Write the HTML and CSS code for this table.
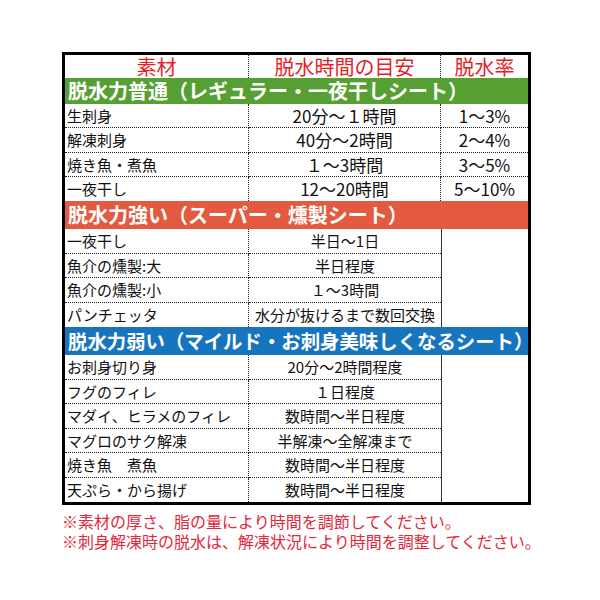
FILE: index.html
```html
<!DOCTYPE html>
<html lang="ja">
<head>
<meta charset="utf-8">
<title>脱水シート 目安表</title>
<link rel="stylesheet" href="styles.css">
</head>
<body>
<div class="sheet">
  <div class="grid">
    <div class="c c1 head">素材</div>
    <div class="c c2 head">脱水時間の目安</div>
    <div class="c c3 head">脱水率</div>

    <div class="bar green">脱水力普通（レギュラー・一夜干しシート）</div>
    <div class="c c1">生刺身</div><div class="c c2 big">20分～１時間</div><div class="c c3 big">1～3%</div>
    <div class="c c1">解凍刺身</div><div class="c c2 big">40分～2時間</div><div class="c c3 big">2～4%</div>
    <div class="c c1">焼き魚・煮魚</div><div class="c c2 big">１～3時間</div><div class="c c3 big">3～5%</div>
    <div class="c c1 last">一夜干し</div><div class="c c2 big last">12～20時間</div><div class="c c3 big last">5～10%</div>

    <div class="bar orange">脱水力強い（スーパー・燻製シート）</div>
    <div class="merge m2"></div>
    <div class="c c1">一夜干し</div><div class="c c2 solo">半日～1日</div>
    <div class="c c1">魚介の燻製:大</div><div class="c c2 solo">半日程度</div>
    <div class="c c1">魚介の燻製:小</div><div class="c c2 solo">１～3時間</div>
    <div class="c c1 last">パンチェッタ</div><div class="c c2 solo last">水分が抜けるまで数回交換</div>

    <div class="bar blue">脱水力弱い（マイルド・お刺身美味しくなるシート）</div>
    <div class="merge m3"></div>
    <div class="c c1">お刺身切り身</div><div class="c c2 solo">20分～2時間程度</div>
    <div class="c c1">フグのフィレ</div><div class="c c2 solo">１日程度</div>
    <div class="c c1">マダイ、ヒラメのフィレ</div><div class="c c2 solo">数時間～半日程度</div>
    <div class="c c1">マグロのサク解凍</div><div class="c c2 solo">半解凍～全解凍まで</div>
    <div class="c c1">焼き魚　煮魚</div><div class="c c2 solo">数時間～半日程度</div>
    <div class="c c1 last">天ぷら・から揚げ</div><div class="c c2 solo last">数時間～半日程度</div>
  </div>
  <div class="notes">
    <p>※素材の厚さ、脂の量により時間を調節してください。</p>
    <p>※刺身解凍時の脱水は、解凍状況により時間を調整してください。</p>
  </div>
</div>
</body>
</html>
```

FILE: styles.css
```css
html, body {
  margin: 0;
  padding: 0;
  background: #ffffff;
}

body {
  font-family: "Noto Sans CJK JP", "Noto Sans", sans-serif;
  color: #111111;
}

.sheet {
  padding: 52px 0 0 62px;
  width: 469px;
}

.grid {
  box-sizing: border-box;
  width: 469px;
  border: 3px solid #000000;
  display: grid;
  grid-template-columns: 184px 192px 87px;
  grid-template-rows: 23px 26px repeat(4, 24.25px) 28px repeat(4, 24.5px) 28px repeat(6, 24.5px);
}

.c {
  box-sizing: border-box;
  display: flex;
  align-items: center;
  font-size: 15px;
  line-height: 1;
  white-space: nowrap;
  border-bottom: 1px dotted #222222;
}

.c.big {
  font-size: 17px;
}

.c.last {
  border-bottom: none;
}

.c1 {
  padding-left: 2px;
  border-right: 1px dotted #222222;
}

.c2 {
  justify-content: center;
  border-right: 1px dotted #222222;
}

.c2.solo {
  border-right: none;
}

.c3 {
  justify-content: center;
}

.c.head {
  justify-content: center;
  padding-left: 0;
  font-size: 20px;
  color: #e61e28;
  border-bottom: none;
}

.bar {
  grid-column: 1 / 4;
  display: flex;
  align-items: center;
  padding-left: 3px;
  color: #ffffff;
  font-size: 20px;
  font-weight: bold;
  line-height: 1;
  white-space: nowrap;
}

.green {
  background: #56a033;
}

.orange {
  background: #e35a40;
}

.blue {
  background: #1675be;
  font-size: 19.4px;
}

.merge {
  grid-column: 3;
  border-left: 1px solid #333333;
  background: #ffffff;
}

.m2 {
  grid-row: 8 / span 4;
}

.m3 {
  grid-row: 13 / span 6;
}

.notes {
  margin-top: 6px;
  color: #e2283a;
  font-size: 16px;
  line-height: 20px;
}

.notes p {
  margin: 0;
  white-space: nowrap;
}
```
